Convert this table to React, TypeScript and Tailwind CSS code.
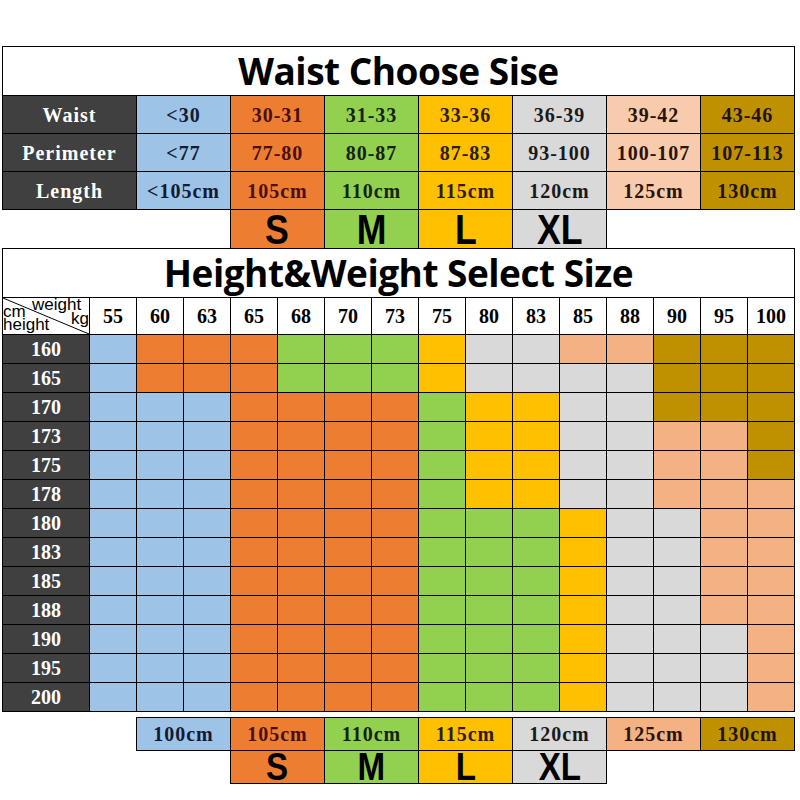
import React from "react";

type Tone = "B" | "O" | "G" | "Y" | "X" | "P" | "K" | "Q";

const fill: Record<Tone, string> = {
  B: "bg-[#9dc3e6] text-[#141a33]",
  O: "bg-[#ed7d31] text-[#4a0f0f]",
  G: "bg-[#92d050] text-[#14240a]",
  Y: "bg-[#ffc000] text-[#2e1c00]",
  X: "bg-[#d9d9d9] text-[#1a1a1a]",
  P: "bg-[#f4b183] text-[#2a1408]",
  Q: "bg-[#f8cbad] text-[#2a1408]",
  K: "bg-[#bf9000] text-[#1f1404]",
};

const serif = "font-['Liberation_Serif','DejaVu_Serif',serif] font-bold";
const title = "font-['Open_Sans','Liberation_Sans',sans-serif] font-bold text-black";
const big = "font-['Liberation_Sans',Arial,sans-serif] font-semibold text-black";

const waistTones: Tone[] = ["B", "O", "G", "Y", "X", "Q", "K"];
const waistRows = [
  { label: "Waist", values: ["<30", "30-31", "31-33", "33-36", "36-39", "39-42", "43-46"] },
  { label: "Perimeter", values: ["<77", "77-80", "80-87", "87-83", "93-100", "100-107", "107-113"] },
  { label: "Length", values: ["<105cm", "105cm", "110cm", "115cm", "120cm", "125cm", "130cm"] },
];

const sizes: { name: string; tone: Tone }[] = [
  { name: "S", tone: "O" },
  { name: "M", tone: "G" },
  { name: "L", tone: "Y" },
  { name: "XL", tone: "X" },
];

const weights = ["55", "60", "63", "65", "68", "70", "73", "75", "80", "83", "85", "88", "90", "95", "100"];
const grid: [string, string][] = [
  ["160", "BOOOGGGYXXPPKKK"],
  ["165", "BOOOGGGYXXXXKKK"],
  ["170", "BBBOOOOGYYXXKKK"],
  ["173", "BBBOOOOGYYXXPPK"],
  ["175", "BBBOOOOGYYXXPPK"],
  ["178", "BBBOOOOGYYXXPPP"],
  ["180", "BBBOOOOGGGYXXPP"],
  ["183", "BBBOOOOGGGYXXPP"],
  ["185", "BBBOOOOGGGYXXPP"],
  ["188", "BBBOOOOGGGYXXPP"],
  ["190", "BBBOOOOGGGYXXXP"],
  ["195", "BBBOOOOGGGYXXXP"],
  ["200", "BBBOOOOGGGYXXXP"],
];

const lengths: { text: string; tone: Tone }[] = [
  { text: "100cm", tone: "B" },
  { text: "105cm", tone: "O" },
  { text: "110cm", tone: "G" },
  { text: "115cm", tone: "Y" },
  { text: "120cm", tone: "X" },
  { text: "125cm", tone: "P" },
  { text: "130cm", tone: "K" },
];

function CornerCell() {
  return (
    <div className="relative h-[36px] bg-white font-['Liberation_Sans',Arial,sans-serif] text-[17px] leading-[17px] text-black">
      <svg className="absolute inset-0" width="86" height="36" viewBox="0 0 86 36">
        <line x1="0" y1="0" x2="86" y2="36" stroke="black" strokeWidth="1" />
      </svg>
      <span className="absolute left-[29px] top-[-2px]">weight</span>
      <span className="absolute left-0 top-[5px]">cm</span>
      <span className="absolute right-0 top-[12px]">kg</span>
      <span className="absolute left-0 top-[18px]">height</span>
    </div>
  );
}

export default function App() {
  return (
    <div className="min-h-[800px] bg-white pl-[2px] pt-[46px]">
      <div className="flex w-max flex-col">
        {/* waist table */}
        <div className="flex w-[793px] flex-col gap-px bg-black p-px">
          <div className={`flex h-[48px] items-center justify-center bg-white ${title} text-[37px] tracking-[-0.5px]`}>
            Waist Choose Sise
          </div>
          <div className="grid grid-cols-[133px_repeat(7,93px)] gap-px">
            {waistRows.map((row) => (
              <React.Fragment key={row.label}>
                <div className={`flex h-[37px] items-center justify-center bg-[#404040] text-white ${serif} text-[20px] tracking-[1px]`}>
                  {row.label}
                </div>
                {row.values.map((v, i) => (
                  <div key={i} className={`flex h-[37px] items-center justify-center ${fill[waistTones[i]]} ${serif} text-[20px] tracking-[1px]`}>
                    {v}
                  </div>
                ))}
              </React.Fragment>
            ))}
          </div>
        </div>
        <div className="ml-[228px] grid w-max grid-cols-[repeat(4,93px)] gap-px bg-black px-px">
          {sizes.map((s) => (
            <div key={s.name} className={`h-[38px] pt-[2px] text-center ${fill[s.tone]} ${big} text-[42px] leading-[36px]`}>
              <span className="inline-block scale-x-[0.85] text-black">{s.name}</span>
            </div>
          ))}
        </div>

        {/* height & weight table */}
        <div className="flex w-[793px] flex-col gap-px bg-black p-px">
          <div className={`flex h-[48px] items-center justify-center bg-white ${title} text-[37px] tracking-[-0.5px]`}>
            Height&amp;Weight Select Size
          </div>
          <div className="grid grid-cols-[86px_repeat(15,46px)] gap-px">
            <CornerCell />
            {weights.map((w) => (
              <div key={w} className={`flex h-[36px] items-center justify-center bg-white text-black ${serif} text-[20px]`}>
                {w}
              </div>
            ))}
            {grid.map(([h, tones]) => (
              <React.Fragment key={h}>
                <div className={`flex h-[28px] items-center justify-center bg-[#404040] text-white ${serif} text-[20px]`}>
                  {h}
                </div>
                {tones.split("").map((t, i) => (
                  <div key={i} className={`h-[28px] ${fill[t as Tone]}`} />
                ))}
              </React.Fragment>
            ))}
          </div>
        </div>

        {/* length legend */}
        <div className="ml-[134px] mt-[5px] flex flex-col">
          <div className="grid w-max grid-cols-[repeat(7,93px)] gap-px bg-black p-px">
            {lengths.map((l) => (
              <div key={l.text} className={`flex h-[32px] items-center justify-center ${fill[l.tone]} ${serif} text-[20px] tracking-[1px]`}>
                {l.text}
              </div>
            ))}
          </div>
          <div className="ml-[94px] grid w-max grid-cols-[repeat(4,93px)] gap-px bg-black px-px pb-px">
            {sizes.map((s) => (
              <div key={s.name} className={`h-[32px] text-center ${fill[s.tone]} ${big} text-[39px] leading-[32px]`}>
                <span className="inline-block scale-x-[0.85] text-black">{s.name}</span>
              </div>
            ))}
          </div>
        </div>
      </div>
    </div>
  );
}
